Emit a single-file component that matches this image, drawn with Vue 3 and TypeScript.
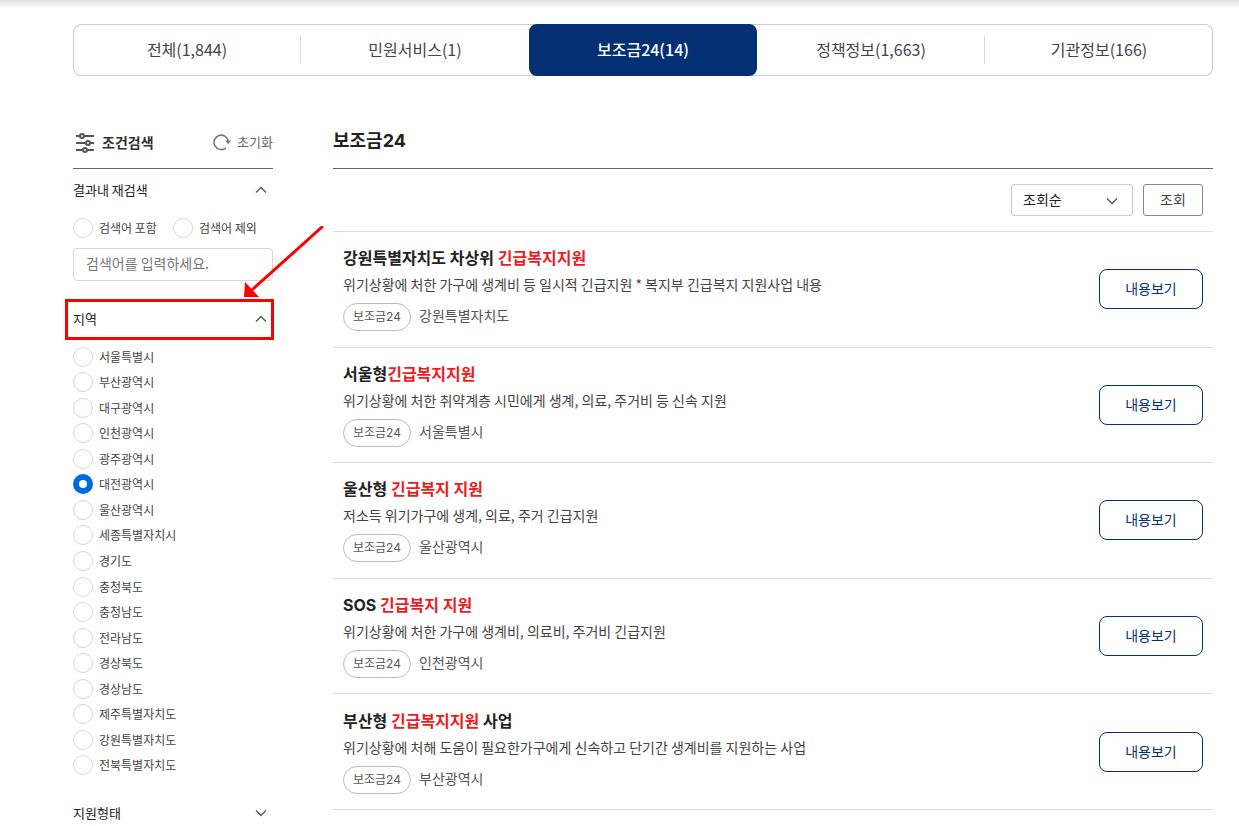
<script setup lang="ts">
import { ref } from 'vue'

interface Tab { label: string; count: string }
interface Service { before: string; mark: string; after: string; desc: string; region: string }

const tabs: Tab[] = [
  { label: '전체', count: '(1,844)' },
  { label: '민원서비스', count: '(1)' },
  { label: '보조금24', count: '(14)' },
  { label: '정책정보', count: '(1,663)' },
  { label: '기관정보', count: '(166)' },
]
const activeTab = ref(2)

const regions: string[] = [
  '서울특별시', '부산광역시', '대구광역시', '인천광역시', '광주광역시', '대전광역시',
  '울산광역시', '세종특별자치시', '경기도', '충청북도', '충청남도', '전라남도',
  '경상북도', '경상남도', '제주특별자치도', '강원특별자치도', '전북특별자치도',
]
const region = ref('대전광역시')
const mode = ref('')
const keyword = ref('')
const sort = ref('조회순')

const services: Service[] = [
  { before: '강원특별자치도 차상위 ', mark: '긴급복지지원', after: '', desc: '위기상황에 처한 가구에 생계비 등 일시적 긴급지원 * 복지부 긴급복지 지원사업 내용', region: '강원특별자치도' },
  { before: '서울형', mark: '긴급복지지원', after: '', desc: '위기상황에 처한 취약계층 시민에게 생계, 의료, 주거비 등 신속 지원', region: '서울특별시' },
  { before: '울산형 ', mark: '긴급복지 지원', after: '', desc: '저소득 위기가구에 생계, 의료, 주거 긴급지원', region: '울산광역시' },
  { before: 'SOS ', mark: '긴급복지 지원', after: '', desc: '위기상황에 처한 가구에 생계비, 의료비, 주거비 긴급지원', region: '인천광역시' },
  { before: '부산형 ', mark: '긴급복지지원', after: ' 사업', desc: '위기상황에 처해 도움이 필요한가구에게 신속하고 단기간 생계비를 지원하는 사업', region: '부산광역시' },
]
</script>

<template>
  <div class="page">
    <nav class="tabs" aria-label="검색 분류">
      <button
        v-for="(t, i) in tabs"
        :key="t.label"
        type="button"
        class="tab"
        :class="{ active: i === activeTab }"
        @click="activeTab = i"
      >{{ t.label }}{{ t.count }}</button>
    </nav>

    <div class="columns">
      <aside class="filters">
        <div class="filters-head">
          <svg class="sliders" width="20" height="20" viewBox="0 0 20 20" aria-hidden="true">
            <g fill="none" stroke="#555" stroke-width="2">
              <path d="M1 3H5M9 3H19M1 10H11M15 10H19M1 17H8M12 17H19" />
              <circle cx="7" cy="3" r="2" />
              <circle cx="13" cy="10" r="2" />
              <circle cx="10" cy="17" r="2" />
            </g>
          </svg>
          <h2>조건검색</h2>
          <button type="button" class="reset">
            <svg width="18" height="18" viewBox="0 0 18 18" aria-hidden="true">
              <path d="M13 14.8A7.2 7.2 0 1 1 15.4 8.6" fill="none" stroke="#777" stroke-width="1.6" />
              <path d="M12.2 7.6H18L15.2 11.2Z" fill="#777" />
            </svg>
            초기화
          </button>
        </div>

        <section>
          <button type="button" class="fold">
            결과내 재검색
            <svg width="12" height="8" viewBox="0 0 12 8" aria-hidden="true"><path d="M1 6.5L6 1.5L11 6.5" /></svg>
          </button>
          <div class="modes">
            <label class="option"><input v-model="mode" type="radio" name="mode" value="include">검색어 포함</label>
            <label class="option"><input v-model="mode" type="radio" name="mode" value="exclude">검색어 제외</label>
          </div>
          <input v-model="keyword" class="keyword" type="text" aria-label="검색어" placeholder="검색어를 입력하세요.">
        </section>

        <section class="region">
          <div class="callout">
            <button type="button" class="fold">
              지역
              <svg width="12" height="8" viewBox="0 0 12 8" aria-hidden="true"><path d="M1 6.5L6 1.5L11 6.5" /></svg>
            </button>
            <svg class="arrow" width="82" height="74" viewBox="0 0 82 74" aria-hidden="true">
              <path d="M79 1L10 63" fill="none" stroke="#f00" stroke-width="3" stroke-linecap="round" />
              <path d="M1 71L2 56L16 71Z" fill="#f00" />
            </svg>
          </div>
          <div class="region-list" role="radiogroup" aria-label="지역">
            <label v-for="r in regions" :key="r" class="option">
              <input v-model="region" type="radio" name="region" :value="r">{{ r }}
            </label>
          </div>
        </section>

        <section class="support">
          <button type="button" class="fold">
            지원형태
            <svg width="12" height="8" viewBox="0 0 12 8" aria-hidden="true"><path d="M1 1.5L6 6.5L11 1.5" /></svg>
          </button>
        </section>
      </aside>

      <main class="results">
        <h1>보조금24</h1>
        <div class="toolbar">
          <div class="select">
            <select v-model="sort" aria-label="정렬"><option>조회순</option></select>
            <svg width="12" height="8" viewBox="0 0 12 8" aria-hidden="true"><path d="M1 1.5L6 6.5L11 1.5" /></svg>
          </div>
          <button type="button" class="search">조회</button>
        </div>
        <ul class="list">
          <li v-for="s in services" :key="s.desc">
            <div class="info">
              <h3>{{ s.before }}<em>{{ s.mark }}</em>{{ s.after }}</h3>
              <p>{{ s.desc }}</p>
              <div class="meta"><span class="badge">보조금24</span><span class="place">{{ s.region }}</span></div>
            </div>
            <button type="button" class="view">내용보기</button>
          </li>
        </ul>
      </main>
    </div>
  </div>
</template>

<style>
html { overflow: hidden; }
body { margin: 0; background: #fff; }
</style>

<style scoped>
* { box-sizing: border-box; }
.page {
  font-family: "Noto Sans CJK KR", sans-serif;
  color: #222;
  padding: 24px 26px 0 73px;
  background: linear-gradient(#dfdfdf, #fff 9px) no-repeat top / 100% 10px;
}
h1, h2, h3, p, ul { margin: 0; padding: 0; }
button, input, select { font-family: inherit; margin: 0; }
button { cursor: pointer; background: none; border: 0; padding: 0 0 2px; }

.tabs {
  display: grid;
  grid-template-columns: repeat(5, 1fr);
  height: 52px;
  border-radius: 8px;
  box-shadow: inset 0 0 0 1px #ccc;
}
.tab { position: relative; font-size: 16px; line-height: 24px; color: #444; }
.tab.active { background: #042f73; color: #fff; border-radius: 8px; font-weight: 500; }
.tab:not(.active):not(:last-child)::after {
  content: "";
  position: absolute;
  right: 0;
  top: 12px;
  width: 1px;
  height: 28px;
  background: #d8d8d8;
}
.tab:nth-child(2)::after { visibility: hidden; }

.columns { display: flex; gap: 60px; align-items: flex-start; }
.filters { flex: 0 0 200px; }
.filters-head {
  display: flex;
  align-items: center;
  height: 93px;
  padding: 42px 0 0 2px;
  border-bottom: 1px solid #666;
}
h2 { margin-left: 7px; padding-bottom: 2px; font-size: 14px; line-height: 20px; color: #333; }
.reset {
  display: flex;
  align-items: center;
  gap: 6px;
  margin-left: auto;
  font-size: 13px;
  line-height: 20px;
  color: #666;
}
.fold {
  display: flex;
  align-items: center;
  justify-content: space-between;
  width: 100%;
  height: 43px;
  padding-right: 6px;
  font-size: 13px;
  line-height: 20px;
  color: #222;
}
.fold path, .select path { fill: none; stroke: #555; stroke-width: 1.3; }
.modes { display: flex; gap: 16px; height: 32px; }
.option {
  display: flex;
  align-items: center;
  gap: 6px;
  font-size: 12px;
  line-height: 18px;
  color: #444;
  white-space: nowrap;
}
.option input {
  appearance: none;
  flex: none;
  width: 20px;
  height: 20px;
  border: 1px solid #d6d6d6;
  border-radius: 50%;
  background: #fff;
}
.option input:checked { border: 6px solid #0068e0; }
.keyword {
  display: block;
  width: 100%;
  height: 33px;
  margin-top: 4px;
  padding: 0 12px 3px;
  border: 1px solid #d6d6d6;
  border-radius: 4px;
  font-size: 14px;
  color: #333;
}
.keyword::placeholder { color: #777; opacity: 1; }
.region { margin-top: 18px; }
.callout { position: relative; margin: 0 -1px 0 -8px; border: 3px solid #f00; }
.callout .fold { height: 35px; padding: 0 4px 2px 5px; }
.arrow { position: absolute; left: 175px; top: -76px; }
.region-list { display: grid; grid-auto-rows: 1fr; height: 434px; margin-top: 4px; }
.support { margin-top: 14px; }

.results { flex: 1; min-width: 0; }
h1 {
  height: 93px;
  padding-top: 51px;
  border-bottom: 1px solid #666;
  font-family: Inter, "Noto Sans CJK KR", sans-serif;
  font-size: 18px;
  line-height: 28px;
}
.toolbar {
  display: flex;
  justify-content: flex-end;
  gap: 10px;
  padding: 15px 10px;
  height: 63px;
  border-bottom: 1px solid #ddd;
}
.select { position: relative; width: 122px; height: 32px; }
.select select {
  appearance: none;
  width: 100%;
  height: 100%;
  padding: 0 11px 2px;
  border: 1px solid #ccc;
  border-radius: 3px;
  background: #fff;
  font-size: 14px;
  color: #222;
}
.select svg { position: absolute; right: 15px; top: 13px; pointer-events: none; }
.search {
  width: 60px;
  height: 32px;
  border: 1px solid #888;
  border-radius: 3px;
  font-size: 14px;
  color: #444;
}
.list { display: grid; grid-auto-rows: 1fr; min-height: 578px; list-style: none; }
.list li {
  display: flex;
  align-items: center;
  justify-content: space-between;
  padding: 0 10px;
  border-bottom: 1px solid #ddd;
}
.info { padding-bottom: 2px; }
h3 { font-family: Inter, "Noto Sans CJK KR", sans-serif; font-size: 16px; line-height: 26px; }
h3 em { font-style: normal; color: #ed1c24; }
.info p { font-size: 14px; line-height: 26px; color: #444; }
.meta { display: flex; gap: 8px; margin-top: 6px; }
.badge {
  height: 28px;
  padding: 0 9px;
  border: 1px solid #bbb;
  border-radius: 14px;
  font-family: Inter, "Noto Sans CJK KR", sans-serif;
  font-size: 12px;
  line-height: 26px;
  color: #555;
}
.place { font-size: 14px; line-height: 24px; color: #555; }
.view {
  flex: none;
  width: 104px;
  height: 40px;
  border: 1px solid #042f73;
  border-radius: 8px;
  font-size: 14px;
  color: #042f73;
}
</style>
